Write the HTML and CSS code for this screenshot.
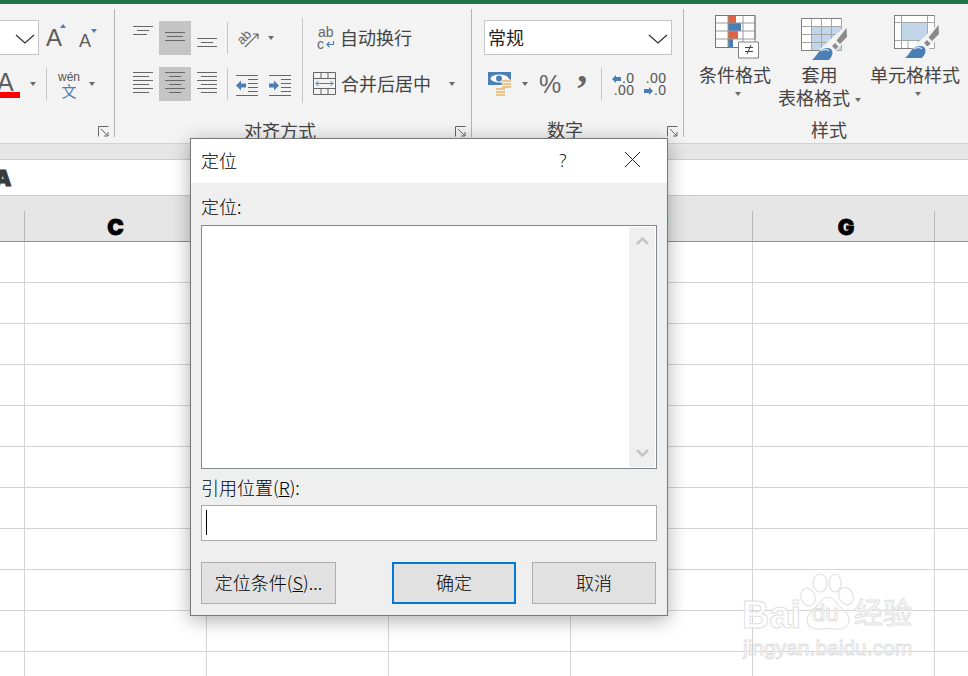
FILE: index.html
```html
<!DOCTYPE html>
<html lang="zh-CN">
<head>
<meta charset="utf-8">
<title>定位</title>
<link rel="stylesheet" href="styles.css">
</head>
<body>
<div class="app">
  <div class="titlebar"></div>
  <div class="ribbon">
    <section class="group g-font">
      <div class="row">
        <div class="combo combo-cut"><svg class="chev" width="20" height="10" viewBox="0 0 20 10"><path d="M1 1l9 8 9-8" fill="none" stroke="#333" stroke-width="1.3"/></svg></div>
        <span class="big-a a-grow">A<i class="tri tri-up"></i></span>
        <span class="big-a a-shrink">A<i class="tri tri-down"></i></span>
      </div>
      <div class="row row-two">
        <span class="big-a a-color">A<i class="redbar"></i></span>
        <i class="drop d-font1"></i>
        <i class="vsep vsep-font"></i>
        <span class="phon"><span class="phon-top">wén</span><span class="phon-bot">文</span></span>
        <i class="drop d-font2"></i>
      </div>
      <svg class="launcher" width="11" height="11" viewBox="0 0 11 11"><path d="M.5 10.5V.5h10M3 3l7 7M10 6v4H6" fill="none" stroke="#666"/></svg>
    </section>

    <section class="group g-align">
      <div class="align-body">
        <div class="align-left">
          <div class="row">
            <span class="tool"><svg width="32" height="34" viewBox="0 0 32 34"><path d="M6 5.5h20M10 9.5h12M6 13.5h14" stroke="#666"/></svg></span>
            <span class="tool on"><svg width="32" height="34" viewBox="0 0 32 34"><path d="M6 11.5h20M8 15.5h16M6 19.5h20" stroke="#666"/></svg></span>
            <span class="tool"><svg width="32" height="34" viewBox="0 0 32 34"><path d="M6 17.5h20M10 21.5h12M6 25.5h20" stroke="#666"/></svg></span>
            <i class="vsep vsep-a"></i>
            <svg class="orient" width="22" height="22" viewBox="0 0 22 22"><text x="0" y="15" transform="rotate(-45 6 12)" class="svgtxt" font-size="13">ab</text><path d="M7 20L20 7M15 7h5v5" fill="none" stroke="#666" stroke-width="1.2"/></svg>
            <i class="drop d-orient"></i>
          </div>
          <div class="row row-two">
            <span class="tool"><svg width="32" height="34" viewBox="0 0 32 34"><path d="M6 5.5h20M6 9.5h16M6 13.5h20M6 17.5h16M6 21.5h20M6 25.5h16" stroke="#666"/></svg></span>
            <span class="tool on"><svg width="32" height="34" viewBox="0 0 32 34"><path d="M6 5.5h20M10 9.5h12M6 13.5h20M10 17.5h12M6 21.5h20M10 25.5h12" stroke="#666"/></svg></span>
            <span class="tool"><svg width="32" height="34" viewBox="0 0 32 34"><path d="M6 5.5h20M10 9.5h16M6 13.5h20M10 17.5h16M6 21.5h20M10 25.5h16" stroke="#666"/></svg></span>
            <i class="vsep vsep-a"></i>
            <svg class="indent" width="23" height="22" viewBox="0 0 23 22"><path d="M0 .5h22M12 4.5h10M12 8.5h10M12 12.5h10M12 16.5h10M0 20.5h22" stroke="#666"/><path d="M0 10.5l5-5v3h5v4H5v3z" fill="#4a7fb5"/></svg>
            <svg class="indent indent2" width="23" height="22" viewBox="0 0 23 22"><path d="M0 .5h22M12 4.5h10M12 8.5h10M12 12.5h10M12 16.5h10M0 20.5h22" stroke="#666"/><path d="M10 10.5l-5-5v3H0v4h5v3z" fill="#4a7fb5"/></svg>
          </div>
        </div>
        <i class="vsep-tall"></i>
        <div class="align-right">
          <div class="wide-row">
            <svg class="wrap-ic" width="18" height="24" viewBox="0 0 18 24"><text x="1" y="11" class="svgtxt" font-size="14">ab</text><text x="0" y="23" class="svgtxt" font-size="14">c</text><path d="M16.500 15v3.500H10M12.500 16l-2.500 2.500 2.500 2.500" fill="none" stroke="#4a7fb5" stroke-width="1.200"/></svg>
            <span class="wide-text">自动换行</span>
          </div>
          <div class="wide-row wide-row2">
            <svg class="merge-ic" width="23" height="23" viewBox="0 0 23 23"><path d="M.5.5h22v22H.5zM.5 6.500h22M.5 16.500h22M8 .5v6M15 .5v6M8 16.500v6M15 16.500v6" fill="none" stroke="#666"/><path d="M3 11.500h17M5.500 9l-2.500 2.500L5.500 14M17.500 9l2.500 2.500-2.500 2.500" fill="none" stroke="#4a7fb5"/></svg>
            <span class="wide-text">合并后居中</span>
            <i class="drop d-merge"></i>
          </div>
        </div>
      </div>
      <div class="group-label">对齐方式</div>
      <svg class="launcher" width="11" height="11" viewBox="0 0 11 11"><path d="M.5 10.5V.5h10M3 3l7 7M10 6v4H6" fill="none" stroke="#666"/></svg>
    </section>

    <section class="group g-num">
      <div class="row">
        <div class="combo combo-num"><span>常规</span><svg class="chev" width="20" height="10" viewBox="0 0 20 10"><path d="M1 1l9 8 9-8" fill="none" stroke="#333" stroke-width="1.3"/></svg></div>
      </div>
      <div class="row row-two num-tools">
        <svg class="money" width="24" height="24" viewBox="0 0 24 24"><path d="M0 0h23v13H0z" fill="#4a7fb5"/><ellipse cx="11.500" cy="6.500" rx="9" ry="4" fill="#fff"/><circle cx="11" cy="6.500" r="3" fill="#4a7fb5"/><ellipse cx="18.500" cy="11" rx="5" ry="5" fill="#f3f3f3"/><path d="M14 9h9M14 12h9M14 15h9M8 17h9M8 20h9M8 23h9" stroke="#ecc48a" stroke-width="2"/></svg>
        <i class="drop d-money"></i>
        <span class="pct">%</span>
        <span class="comma">,</span>
        <i class="vsep vsep-n"></i>
        <span class="dec dec1"><span class="dec-line"><svg width="9" height="8" viewBox="0 0 9 8"><path d="M0 4l4-4v2h5v4H4v2z" fill="#4a7fb5"/></svg>.0</span><span class="dec-line">.00</span></span>
        <span class="dec dec2"><span class="dec-line">.00</span><span class="dec-line"><svg width="9" height="8" viewBox="0 0 9 8"><path d="M9 4L5 0v2H0v4h5v2z" fill="#4a7fb5"/></svg>.0</span></span>
      </div>
      <div class="group-label">数字</div>
      <svg class="launcher" width="11" height="11" viewBox="0 0 11 11"><path d="M.5 10.5V.5h10M3 3l7 7M10 6v4H6" fill="none" stroke="#666"/></svg>
    </section>

    <section class="group g-style">
      <div class="style-cols">
        <div class="style-col c1">
          <svg class="style-ic" width="45" height="46" viewBox="0 0 45 46">
            <path d="M1 1h39v32H1z" fill="#fff"/>
            <path d="M13 1h8v8h-8z" fill="#dd6545"/><path d="M13 9h13v8H13z" fill="#4a7fb5"/><path d="M13 17h10v8H13z" fill="#dd6545"/><path d="M13 25h5v8h-5z" fill="#4a7fb5"/>
            <path d="M.5 1.500h39.500v32H.5zM13 1.500v32M28 1.500v32M.5 9h39.500M.5 17h39.500M.5 25h39.500" fill="none" stroke="#999"/>
            <path d="M.5 1.500h39.500v24M.5 1.500v32h23" fill="none" stroke="#777"/>
            <path d="M23.500 28h20v16h-20z" fill="#fff" stroke="#808080"/>
            <path d="M30 33.500h8M30 37.500h8M36 31l-4 9" fill="none" stroke="#444"/>
          </svg>
          <div class="style-text">条件格式</div>
          <div class="style-text"><i class="drop drop-in"></i></div>
        </div>
        <div class="style-col c2">
          <svg class="style-ic" width="47" height="46" viewBox="0 0 47 46">
            <path d="M1 4h40v32H1z" fill="#fff"/><path d="M11 12h30v24H11z" fill="#c3d5e8"/>
            <path d="M.5 4.500h40v32H.5zM.5 12.500h40M.5 20.500h40M.5 28.500h40M10.500 4.500v32M20.500 4.500v32M30.500 4.500v32" fill="none" stroke="#a6a6a6"/>
            <path d="M.5 4.500h40M.5 4.500v32h18" fill="none" stroke="#7f7f7f"/>
            <path d="M18 36l24-22h5v10L32 40z" fill="#f3f3f3"/>
            <path d="M45.500 14l.5 9-7 7-3.500-3.500zM34 29l3.500 3.500-3 3-3.500-3.500z" fill="#8a8a8a"/>
            <path d="M11 46c4-3 5-7 8-9 3-3 8-4 11-2 3 3 1 8-2 11z" fill="#4a7fb5"/>
            <path d="M20 37c3-2 6-2 8 0" fill="none" stroke="#c9d9ea" stroke-width="1.500"/>
          </svg>
          <div class="style-text">套用</div>
          <div class="style-text">表格格式<i class="drop drop-after"></i></div>
        </div>
        <div class="style-col c3">
          <svg class="style-ic" width="46" height="46" viewBox="0 0 46 46">
            <path d="M1 1h40v33H1z" fill="#fff"/><path d="M8 9h26v18H8z" fill="#c3d5e8"/>
            <path d="M.5 1.500h40v33H.5zM.5 8.500h40M.5 26.500h40M7.500 1.500v33M33.500 1.500v33M14 26.500v8M24 26.500v8" fill="none" stroke="#a6a6a6"/>
            <path d="M.5 1.500h40M.5 1.500v33h18" fill="none" stroke="#7f7f7f"/>
            <path d="M18 34l24-22h4v10L32 38z" fill="#f3f3f3"/>
            <path d="M44.500 11l.5 9-7 7-3.500-3.500zM33 26l3.500 3.500-3 3-3.500-3.500z" fill="#8a8a8a"/>
            <path d="M11 44c4-3 5-7 8-9 3-3 8-4 11-2 3 3 1 8-2 11z" fill="#4a7fb5"/>
            <path d="M20 35c3-2 6-2 8 0" fill="none" stroke="#c9d9ea" stroke-width="1.500"/>
          </svg>
          <div class="style-text">单元格样式</div>
          <div class="style-text"><i class="drop drop-in"></i></div>
        </div>
      </div>
      <div class="group-label">样式</div>
    </section>
  </div>

  <div class="band"></div>
  <div class="formula"><span class="heavy cut-a">A</span></div>
  <div class="colheads">
    <div class="colhead first"></div>
    <div class="colhead"><span class="heavy">C</span></div>
    <div class="colhead"><span class="heavy">D</span></div>
    <div class="colhead"><span class="heavy">E</span></div>
    <div class="colhead"><span class="heavy">F</span></div>
    <div class="colhead"><span class="heavy g-letter">G</span></div>
    <div class="colhead"><span class="heavy">H</span></div>
  </div>
  <div class="sheet"></div>

  <div class="dialog">
    <header class="dlg-head">
      <span class="dlg-title">定位</span>
      <span class="dlg-help">?</span>
      <svg class="dlg-close" width="17" height="17" viewBox="0 0 17 17"><path d="M1 1l15 15M16 1L1 16" stroke="#222" stroke-width="1"/></svg>
    </header>
    <div class="dlg-body">
      <label class="dlg-label first-label">定位:</label>
      <div class="listbox">
        <div class="scroll">
          <svg width="13" height="8" viewBox="0 0 13 8"><path d="M1 7l5.500-5.500L12 7" fill="none" stroke="#c4c4c4" stroke-width="2.500"/></svg>
          <svg width="13" height="8" viewBox="0 0 13 8"><path d="M1 1l5.500 5.500L12 1" fill="none" stroke="#c4c4c4" stroke-width="2.500"/></svg>
        </div>
      </div>
      <label class="dlg-label ref-label">引用位置(<u>R</u>):</label>
      <div class="refinput"><i class="caret"></i></div>
      <div class="dlg-buttons">
        <button class="btn btn-special" type="button">定位条件(<u>S</u>)...</button>
        <button class="btn btn-ok" type="button">确定</button>
        <button class="btn btn-cancel" type="button">取消</button>
      </div>
    </div>
  </div>

  <div class="watermark">
    <svg class="paw" width="60" height="62" viewBox="0 0 60 62">
      <g fill="none" stroke="#e2e2e2" stroke-width="1.200">
        <ellipse cx="20" cy="11" rx="7" ry="9"/>
        <ellipse cx="35" cy="11" rx="6" ry="9"/>
        <ellipse cx="8" cy="25" rx="7" ry="9" transform="rotate(-20 8 25)"/>
        <ellipse cx="46" cy="24" rx="7" ry="9" transform="rotate(-25 46 24)"/>
        <path d="M7 48c0-8 9-11 13-18 4-6 12-6 16 0 4 7 14 10 13 19-1 7-8 9-14 8-5-1-9-1-14 0-7 1-14-2-14-9z"/>
      </g>
    </svg>
    <span class="wm-bai">Bai</span><span class="wm-du">du</span><span class="wm-cn">经验</span>
    <span class="wm-url">jingyan.baidu.com</span>
  </div>
</div>
</body>
</html>
```

FILE: styles.css
```css
* { box-sizing: border-box; }
html, body { margin: 0; padding: 0; }
body { width: 968px; height: 676px; overflow: hidden; background: #fff; }
.app {
  position: relative;
  width: 968px;
  height: 676px;
  overflow: hidden;
  display: flex;
  flex-direction: column;
  font-family: "Noto Sans CJK SC", "Noto Sans", sans-serif;
  font-size: 18px;
  color: #444;
}
i { display: block; font-style: normal; }
.titlebar { height: 4px; background: #217346; flex: none; }

/* ribbon */
.ribbon {
  height: 140px;
  flex: none;
  display: flex;
  padding-top: 5px;
  background: #f3f3f3;
  border-bottom: 1px solid #d2d2d2;
}
.group {
  position: relative;
  height: 128px;
  flex: none;
  padding-top: 12px;
  border-right: 1px solid #b4b4b4;
}
.g-font { width: 115px; }
.g-align { width: 357px; }
.g-num { width: 212px; }
.g-style { width: 290px; padding-top: 0; border-right: 0; }
.row { display: flex; align-items: center; height: 34px; }
.row-two { margin-top: 12px; }
.group-label { margin-top: 18px; height: 20px; line-height: 20px; text-align: center; color: #444; white-space: nowrap; }
.g-num .group-label { padding-right: 25px; }
.launcher { position: absolute; right: 5px; bottom: 0; }

.combo { background: #fff; border: 1px solid #c6c6c6; height: 35px; margin-top: -1px; position: relative; flex: none; }
.combo-cut { width: 41px; margin-left: -2px; border-width: 1px 1px 1px 0; }
.chev { position: absolute; right: 3px; top: 13px; }
.combo-num { width: 188px; margin-left: 12px; padding-left: 3px; line-height: 32px; color: #222; }

.big-a { position: relative; display: block; font-family: "Liberation Sans", sans-serif; color: #5c5c5c; line-height: 1; flex: none; }
.a-grow { font-size: 24px; margin-left: 7px; width: 20px; height: 24px; }
.a-shrink { font-size: 18px; margin-left: 13px; width: 20px; height: 18px; margin-top: 5px; }
.tri { position: absolute; width: 0; height: 0; border-left: 3.500px solid transparent; border-right: 3.500px solid transparent; }
.tri-up { border-bottom: 4px solid #4a7fb5; left: 14px; top: -2px; }
.tri-down { border-top: 4px solid #4a7fb5; left: 12px; top: -3px; }
.a-color { font-size: 25px; margin-left: -3px; width: 20px; height: 28px; line-height: 24px; margin-top: 0; }
.redbar { position: absolute; left: 0; top: 22px; width: 23px; height: 6px; background: #f00; }

.drop { width: 0; height: 0; flex: none; border-left: 3.500px solid transparent; border-right: 3.500px solid transparent; border-top: 4px solid #6a6a6a; }
.d-font1 { margin-left: 13px; }
.vsep { width: 1px; height: 32px; background: #c6c6c6; flex: none; }
.vsep-font { margin-left: 10px; }
.phon { display: flex; flex-direction: column; align-items: center; width: 24px; margin-left: 10px; flex: none; }
.phon-top { font-family: "Liberation Sans", sans-serif; font-size: 12px; line-height: 12px; color: #555; white-space: nowrap; }
.phon-bot { font-size: 15px; line-height: 15px; color: #4a7fb5; }
.d-font2 { margin-left: 8px; }

/* alignment */
.align-body { display: flex; height: 80px; }
.align-left { width: 187px; padding-left: 12px; flex: none; }
.tool { display: block; width: 32px; height: 34px; flex: none; }
.tool svg { display: block; }
.tool.on { background: #c5c5c5; }
.vsep-a { margin-left: 4px; }
.orient { margin-left: 10px; flex: none; }
.d-orient { margin-left: 8px; }
.indent { margin-left: 8px; margin-top: 4px; flex: none; }
.indent2 { margin-left: 10px; }
.svgtxt { font-family: "Liberation Sans", sans-serif; fill: #666; }
.vsep-tall { display: block; width: 1px; height: 85px; margin-top: -3px; background: #c6c6c6; flex: none; }
.align-right { padding-left: 10px; flex: 1; }
.wide-row { display: flex; align-items: center; height: 34px; position: relative; }
.wide-row2 { margin-top: 12px; }
.wrap-ic { margin-left: 4px; flex: none; }
.merge-ic { flex: none; margin-bottom: 2px; }
.wide-text { margin-left: 5px; white-space: nowrap; padding-bottom: 2px; }
.wrap-ic + .wide-text { margin-left: 5px; }
.d-merge { margin-left: 18px; }
.g-align .group-label { margin-top: 19px; padding-right: 26px; }

/* number */
.num-tools { align-items: center; }
.money { margin-left: 16px; flex: none; }
.d-money { margin-left: 10px; }
.pct { font-family: "Liberation Sans", sans-serif; font-size: 25px; color: #666; margin-left: 11px; line-height: 34px; }
.comma { font-family: "Liberation Serif", serif; font-weight: 700; font-size: 40px; color: #666; margin-left: 16px; line-height: 34px; margin-top: -30px; }
.vsep-n { margin-left: 14px; }
.dec { display: flex; flex-direction: column; align-items: flex-end; font-family: "Liberation Sans", sans-serif; font-size: 14px; line-height: 12px; color: #555; letter-spacing: .3px; flex: none; }
.dec-line { white-space: nowrap; }
.dec svg { margin-right: 1px; }
.dec1 { margin-left: 9px; width: 23px; }
.dec2 { margin-left: 9px; width: 23px; }

/* styles */
.style-cols { display: flex; padding: 5px 0 0 10px; height: 101px; }
.style-col { text-align: center; flex: none; }
.c1 { width: 82px; }
.c2 { width: 90px; }
.c3 { width: 98px; }
.style-ic { display: block; margin: 0 0 3px 21px; }
.c2 .style-ic { margin-left: 25px; }
.c3 .style-ic { margin-left: 28px; }
.style-text { height: 23px; line-height: 23px; white-space: nowrap; position: relative; }
.c2 .style-text { padding-right: 3px; }
.drop-in { display: inline-block; vertical-align: top; margin-top: 6px; }
.c1 .drop-in { margin-left: 6px; }
.c3 .drop-in { margin-left: 6px; }
.drop-after { display: inline-block; vertical-align: middle; margin: 0 0 0 5px; }
.g-style .group-label { margin-top: 9px; text-align: center; }

/* sheet chrome */
.band { height: 16px; flex: none; background: #e6e6e6; border-bottom: 1px solid #cdcdcd; }
.formula { height: 36px; flex: none; background: #fff; border-bottom: 1px solid #c8c8c8; line-height: 35px; overflow: hidden; }
.heavy {
  font-family: Inter, "Liberation Sans", sans-serif;
  font-weight: 900;
  font-size: 22px;
  color: #000;
  -webkit-text-stroke: .8px #000;
  line-height: 1;
  padding-top: 2px;
}
.cut-a { display: block; margin: 7px 0 0 -6px; padding-top: 0; color: #3a3a3a; -webkit-text-stroke-color: #3a3a3a; }
.colheads { height: 46px; flex: none; display: flex; background: #e6e6e6; border-bottom: 1px solid #8f8f8f; overflow: hidden; padding-top: 15px; }
.colhead { width: 182px; height: 30px; flex: none; display: flex; align-items: center; justify-content: center; border-right: 1px solid #b9b9b9; }
.colhead.first { width: 25px; }
.g-letter { margin-left: 5px; }
.sheet {
  flex: 1;
  background-color: #fff;
  background-image:
    linear-gradient(90deg, transparent 181px, #d4d4d4 181px),
    linear-gradient(180deg, transparent 40px, #d4d4d4 40px);
  background-size: 182px 100%, 100% 41px;
  background-position: 25px 0, 0 0;
  background-repeat: repeat-x, repeat-y;
}

/* dialog */
.dialog {
  position: absolute;
  left: 190px;
  top: 138px;
  width: 478px;
  height: 478px;
  background: #efefef;
  border: 1px solid #777;
  box-shadow: 0 4px 18px rgba(0, 0, 0, .32);
  color: #000;
  font-weight: 300;
}
.dlg-head { height: 44px; background: #fff; display: flex; align-items: center; padding: 0 0 3px 11px; position: relative; }
.dlg-title { line-height: 38px; margin-left: -1px; }
.dlg-help { margin-left: 322px; font-family: "Noto Sans", sans-serif; color: #222; }
.dlg-close { margin-left: 57px; }
.dlg-body { padding: 14px 10px 0; }
.dlg-label { display: block; height: 20px; line-height: 18px; white-space: nowrap; }
.listbox { height: 244px; margin-top: 8px; background: #fff; border: 1px solid #828790; display: flex; justify-content: flex-end; padding: 1px; }
.scroll { width: 26px; background: #efefef; display: flex; flex-direction: column; justify-content: space-between; align-items: center; padding: 10px 0; margin-right: 0; }
.scroll svg { display: block; }
.ref-label { margin-top: 9px; }
.refinput { height: 36px; margin-top: 7px; background: #fff; border: 1px solid #ababab; padding: 4px 4px; }
.caret { width: 1px; height: 25px; background: #000; }
.dlg-buttons { display: flex; margin-top: 21px; padding-right: 1px; }
.btn {
  height: 42px;
  padding: 0 0 2px;
  background: #e1e1e1;
  border: 1px solid #adadad;
  font: inherit;
  font-weight: 300;
  color: #000;
  flex: none;
}
.btn-special { width: 135px; }
.btn-ok { width: 124px; margin-left: 56px; border: 2px solid #0078d7; }
.btn-cancel { width: 124px; margin-left: 16px; }

/* watermark */
.watermark { position: absolute; left: 742px; top: 572px; width: 180px; height: 90px; pointer-events: none; }
.paw { position: absolute; left: 58px; top: 0; }
.wm-bai, .wm-du, .wm-cn, .wm-url {
  position: absolute;
  font-family: "Liberation Sans", sans-serif;
  color: rgba(255, 255, 255, .75);
  -webkit-text-stroke: 1px #dfdfdf;
  line-height: 1;
  white-space: nowrap;
}
.wm-bai { left: 0; top: 24px; font-size: 38px; font-weight: 700; }
.wm-du { left: 70px; top: 29px; font-size: 24px; }
.wm-cn { left: 112px; top: 25px; font-size: 29px; font-family: "Noto Sans CJK SC", sans-serif; }
.wm-url { left: 1px; top: 65px; font-size: 21px; }
```
